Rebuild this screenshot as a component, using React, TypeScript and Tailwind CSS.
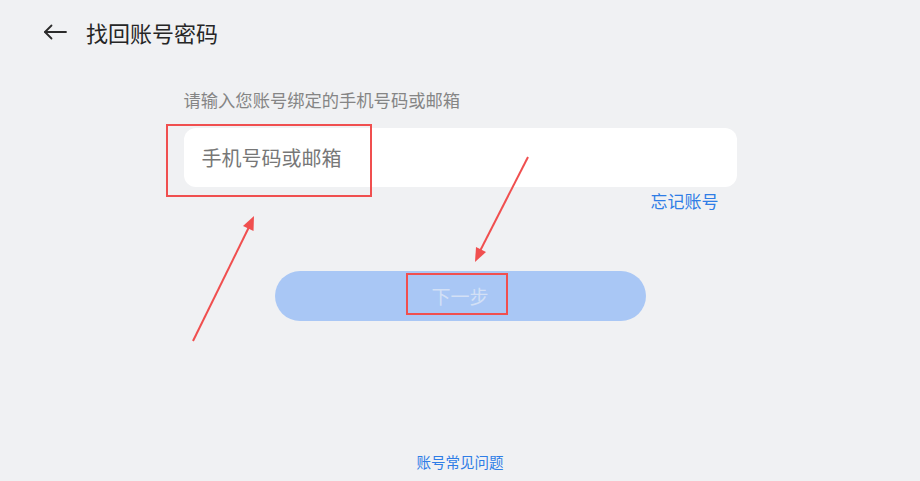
import React from "react";

// 找回账号密码 - 第一步：输入手机号或邮箱
const font = { fontFamily: '"Noto Sans CJK SC", "Noto Sans", sans-serif' };

export default function App() {
  return (
    <div className="relative flex h-[481px] w-[920px] flex-col overflow-hidden bg-[#f0f1f3]" style={font}>
      {/* 顶部标题栏 */}
      <div className="flex h-16 items-center pl-[43px]">
        <svg width="24" height="20" viewBox="0 0 24 20" fill="none" stroke="#2b2b2b" strokeWidth="1.8" strokeLinecap="round" strokeLinejoin="round">
          <path d="M23 10H2" />
          <path d="M8.5 3.5L2 10l6.5 6.5" />
        </svg>
        <h1 className="ml-[19px] text-[22px] font-normal text-[#262626]">找回账号密码</h1>
      </div>

      {/* 主体内容 */}
      <div className="mx-auto flex w-[553px] flex-col">
        <p className="mt-6 text-[17.3px] leading-6 text-[#858585]">请输入您账号绑定的手机号码或邮箱</p>
        <div className="mt-4 flex h-[59px] items-center rounded-xl bg-white pl-[18px]">
          <input
            className="w-full bg-transparent text-[20px] text-[#333] outline-none placeholder:text-[#777]"
            placeholder="手机号码或邮箱"
          />
        </div>
        <div className="mt-[2px] flex justify-end pr-[18px]">
          <span className="text-[17px] leading-6 text-[#2f7de6]">忘记账号</span>
        </div>
        <button className="mx-auto mt-[58px] flex h-[50px] w-[371px] items-center justify-center rounded-full bg-[#a9c7f5] text-[19px] text-[#d3e0f5]">
          下一步
        </button>
      </div>

      <div className="flex-1" />
      <p className="pb-[9px] text-center text-[14.5px] leading-5 text-[#2f7de6]">账号常见问题</p>

      {/* 标注：红框与箭头 */}
      <div className="pointer-events-none absolute left-[166px] top-[124px] h-[73px] w-[206px] border-2 border-[#f04f4f]" />
      <div className="pointer-events-none absolute left-[406px] top-[273px] h-[42px] w-[102px] border-2 border-[#f04f4f]" />
      <svg className="pointer-events-none absolute left-0 top-0" width="920" height="481" viewBox="0 0 920 481">
        <line x1="193" y1="341" x2="249" y2="227" stroke="#f04f4f" strokeWidth="2" />
        <path d="M254 216L253.5 231L243 226Z" fill="#f04f4f" />
        <line x1="528" y1="157" x2="480" y2="251" stroke="#f04f4f" strokeWidth="2" />
        <path d="M475 262L476 247L486 252Z" fill="#f04f4f" />
      </svg>
    </div>
  );
}
